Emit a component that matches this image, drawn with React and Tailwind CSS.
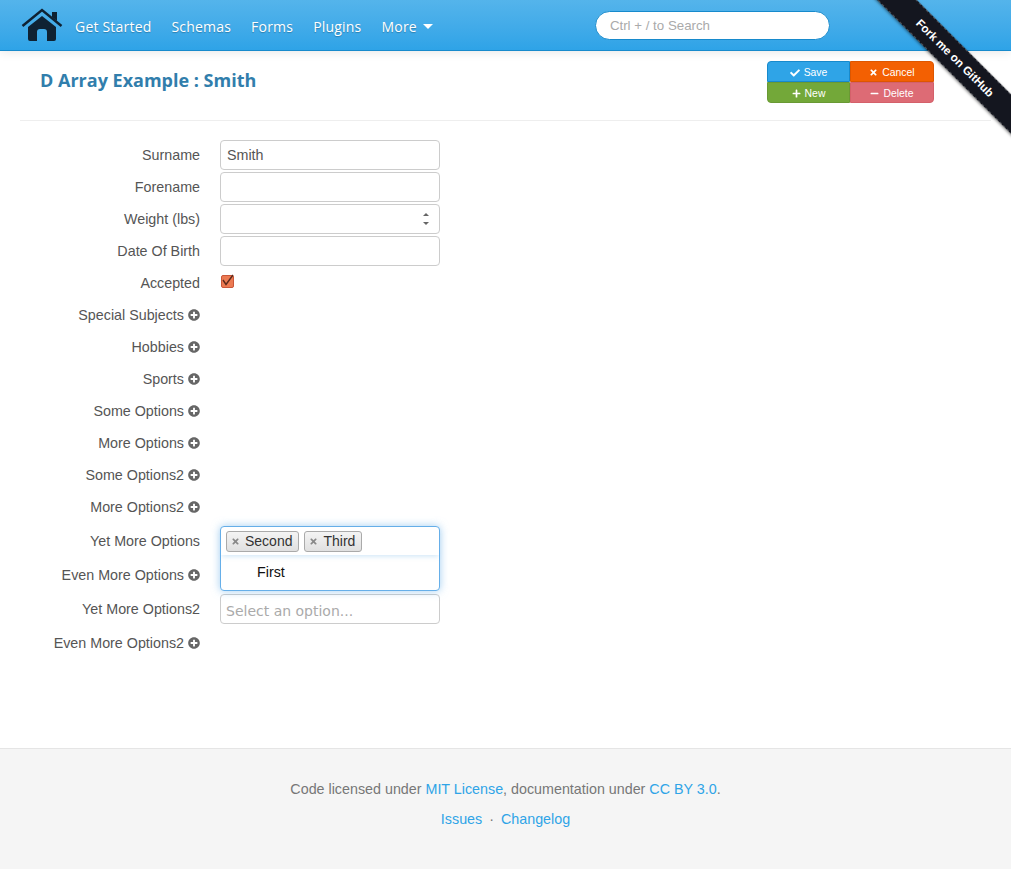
import { FaCheck, FaTimes, FaPlus, FaMinus, FaPlusCircle } from "react-icons/fa";

const navLinks = ["Get Started", "Schemas", "Forms", "Plugins"];

function Label({ children, add }) {
  return (
    <label className="flex w-[180px] shrink-0 items-center justify-end gap-1 pt-0.5 text-right text-[14.3px] text-[#555]">
      {children}
      {add && <FaPlusCircle className="-mt-0.5 size-3 text-[#666]" />}
    </label>
  );
}

function Field({ label, add, className = "h-8", children }) {
  return (
    <div className={`flex gap-5 ${className}`}>
      <Label add={add}>{label}</Label>
      {children}
    </div>
  );
}

function TextBox({ value }) {
  return (
    <div className="my-px flex h-[30px] w-[220px] items-center rounded border border-[#ccc] bg-white px-1.5 pt-0.5 text-[14.3px] text-[#555]">
      {value}
    </div>
  );
}

function Tag({ children }) {
  return (
    <span className="flex h-[21px] items-center gap-[5px] rounded-[3px] border border-[#aaa] bg-gradient-to-b from-[#f4f4f4] to-[#e0e0e0] pl-1 pr-1.5 pt-px text-[14px] text-[#333]">
      <FaTimes className="size-[9px] text-[#888]" />
      {children}
    </span>
  );
}

function ActionButton({ color, border, icon, rounded, children }) {
  return (
    <button className={`flex h-[21px] w-full items-center justify-center gap-1 border pt-0.5 text-[10.4px] text-white ${color} ${border} ${rounded}`}>
      {icon}
      {children}
    </button>
  );
}

export default function App() {
  return (
    <div className="relative flex min-h-[869px] flex-col overflow-hidden bg-white font-['Liberation_Sans',sans-serif]">
      <nav className="flex h-[51px] shrink-0 items-center border-b border-[#178acc] bg-gradient-to-b from-[#54b4eb] to-[#2ea3e7] pl-[21px] shadow-[0_1px_10px_rgba(0,0,0,0.1)]">
        <svg viewBox="0 0 42 36" className="h-9 w-[42px]">
          <path d="M1.5 19 21 3l19.5 16" fill="none" stroke="#0f2233" strokeWidth="2.5" />
          <path d="M31 5h5v9l-5-4Z" fill="#0f2233" />
          <path d="M7 20 21 9l14 11v12a2 2 0 0 1-2 2h-7V25a3 3 0 0 0-3-3h-4a3 3 0 0 0-3 3v9H9a2 2 0 0 1-2-2Z" fill="#0f2233" />
        </svg>
        <ul className="ml-3 flex gap-5 pt-0.5 font-['Open_Sans',sans-serif] text-[14px] tracking-[0.2px] text-white [text-shadow:0_1px_1px_rgba(0,0,0,0.25)]">
          {navLinks.map((link) => (
            <li key={link}>{link}</li>
          ))}
          <li className="flex items-center gap-1.5">
            More
            <span className="mt-px border-x-[5px] border-t-[5px] border-x-transparent border-t-white" />
          </li>
        </ul>
        <div className="ml-[162px] flex h-[29px] w-[235px] items-center rounded-full border border-[#178acc] bg-white px-3.5 pt-0.5 text-[13.3px] text-[#aaa]">
          Ctrl + / to Search
        </div>
      </nav>

      <a className="absolute right-[-49px] top-[44px] flex h-7 w-[210px] rotate-45 items-center justify-center bg-[#14161f] text-[11.6px] font-bold text-white shadow-[0_1px_3px_rgba(0,0,0,0.5)]">
        <span className="flex h-full w-full items-center justify-center border-y border-dashed border-white/25">Fork me on GitHub</span>
      </a>

      <main className="flex-1 px-5">
        <header className="flex h-[70px] justify-between border-b border-[#eee] pl-5 pr-[57px]">
          <h1 className="mt-4 font-['Open_Sans',sans-serif] text-[18px] font-bold text-[#317eac]">D Array Example : Smith</h1>
          <div className="mt-2.5 grid grid-cols-[83px_84px] self-start">
            <ActionButton color="bg-[#2fa4e7]" border="border-[#178acc]" rounded="rounded-tl-[4px]" icon={<FaCheck className="size-2.5" />}>Save</ActionButton>
            <ActionButton color="bg-[#f36002]" border="border-[#dd5600]" rounded="rounded-tr-[4px]" icon={<FaTimes className="size-[9px]" />}>Cancel</ActionButton>
            <ActionButton color="bg-[#73a839]" border="border-[#699934]" rounded="rounded-bl-[4px]" icon={<FaPlus className="size-[9px]" />}>New</ActionButton>
            <ActionButton color="bg-[#dd6b75]" border="border-[#d4606a]" rounded="rounded-br-[4px]" icon={<FaMinus className="size-[9px]" />}>Delete</ActionButton>
          </div>
        </header>

        <form className="pt-[18px]">
          <Field label="Surname"><TextBox value="Smith" /></Field>
          <Field label="Forename"><TextBox /></Field>
          <Field label="Weight (lbs)">
            <div className="my-px flex h-[30px] w-[220px] flex-col items-end justify-center gap-1.5 rounded border border-[#ccc] pr-[10px]">
              <span className="border-x-[3px] border-b-[3px] border-x-transparent border-b-[#666]" />
              <span className="border-x-[3px] border-t-[3px] border-x-transparent border-t-[#666]" />
            </div>
          </Field>
          <Field label="Date Of Birth"><TextBox /></Field>
          <Field label="Accepted">
            <span className="ml-px mt-2 flex size-[13px] items-center justify-center self-start rounded-[2px] border border-[#c9573a] bg-[#ec7a52]">
              <svg viewBox="0 0 13 13" className="size-[13px] shrink-0 overflow-visible">
                <path d="M2 5l3 4.5L12 0" fill="none" stroke="#5b2a1c" strokeWidth="1.4" />
              </svg>
            </span>
          </Field>
          <Field label="Special Subjects" add />
          <Field label="Hobbies" add />
          <Field label="Sports" add />
          <Field label="Some Options" add />
          <Field label="More Options" add />
          <Field label="Some Options2" add />
          <Field label="More Options2" add />
          <Field label="Yet More Options" className="relative mt-px h-[34px]">
            <div className="absolute left-[200px] top-0.5 z-10 h-[65px] w-[220px] rounded border border-[#66afe9] bg-white shadow-[0_0_8px_rgba(102,175,233,0.6)]">
              <div className="flex h-7 items-center gap-[5px] pl-[5px] shadow-[0_3px_4px_-1px_rgba(102,175,233,0.25)]">
                <Tag>Second</Tag>
                <Tag>Third</Tag>
              </div>
              <div className="pl-9 pt-[7px] text-[14.3px] text-[#111]">First</div>
            </div>
          </Field>
          <Field label="Even More Options" add className="h-[34px]" />
          <Field label="Yet More Options2" className="h-[34px]">
            <div className="mt-0.5 flex h-[30px] w-[220px] items-center rounded border border-[#ccc] px-[5px] pt-1 font-['DejaVu_Sans',sans-serif] text-[14px] text-[#aaa]">
              Select an option...
            </div>
          </Field>
          <Field label="Even More Options2" add className="h-[34px]" />
        </form>
      </main>

      <footer className="h-[121px] shrink-0 border-t border-[#e5e5e5] bg-[#f5f5f5] pt-[30px] text-center text-[14.3px] leading-[20px] text-[#777]">
        <p>
          Code licensed under <a className="text-[#2fa4e7]">MIT License</a>, documentation under <a className="text-[#2fa4e7]">CC BY 3.0</a>.
        </p>
        <p className="mt-2.5">
          <a className="text-[#2fa4e7]">Issues</a>
          <span className="mx-[7px]">·</span>
          <a className="text-[#2fa4e7]">Changelog</a>
        </p>
      </footer>
    </div>
  );
}
